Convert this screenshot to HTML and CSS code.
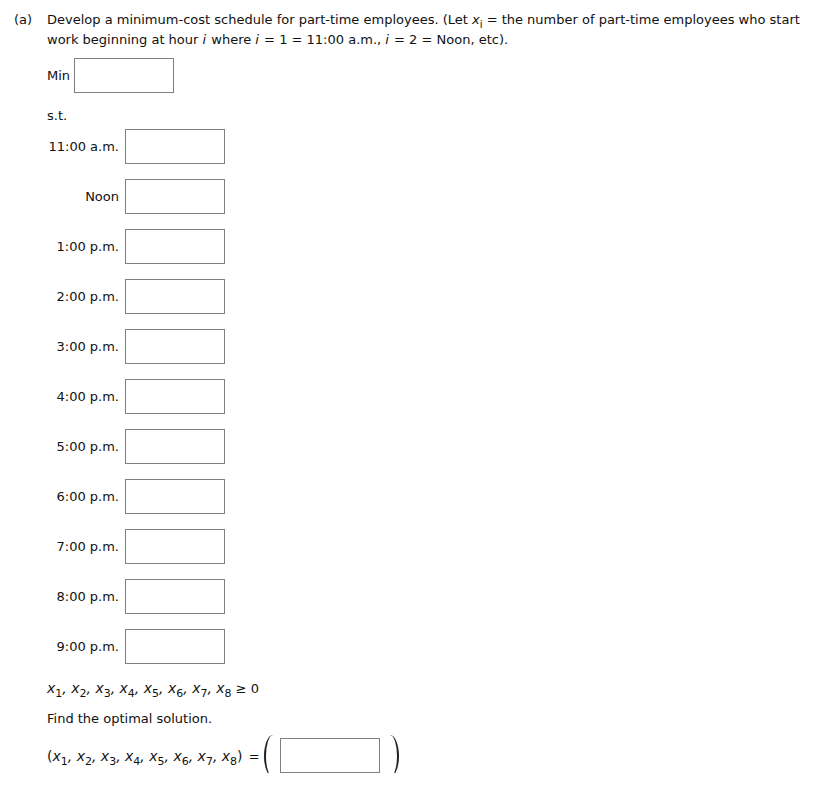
FILE: index.html
```html
<!DOCTYPE html>
<html>
<head>
<meta charset="utf-8">
<link rel="stylesheet" href="styles.css">
</head>
<body>
<div class="question">
  <div class="part-label">(a)</div>
  <div class="part-body">
    <p class="intro">Develop a minimum-cost schedule for part-time employees. (Let <i class="var">x<sub>i</sub></i> = the number of part-time employees who start work beginning at hour <i class="ivar">i</i> where <i class="ivar">i</i> = 1 = 11:00 a.m., <i class="ivar">i</i> = 2 = Noon, etc).</p>
    <div class="min-row"><span class="min-label">Min</span><input class="box" type="text"></div>
    <p class="st">s.t.</p>
    <div class="constraints">
      <div class="row"><span class="row-label">11:00 a.m.</span><input class="box" type="text"></div>
      <div class="row"><span class="row-label">Noon</span><input class="box" type="text"></div>
      <div class="row"><span class="row-label">1:00 p.m.</span><input class="box" type="text"></div>
      <div class="row"><span class="row-label">2:00 p.m.</span><input class="box" type="text"></div>
      <div class="row"><span class="row-label">3:00 p.m.</span><input class="box" type="text"></div>
      <div class="row"><span class="row-label">4:00 p.m.</span><input class="box" type="text"></div>
      <div class="row"><span class="row-label">5:00 p.m.</span><input class="box" type="text"></div>
      <div class="row"><span class="row-label">6:00 p.m.</span><input class="box" type="text"></div>
      <div class="row"><span class="row-label">7:00 p.m.</span><input class="box" type="text"></div>
      <div class="row"><span class="row-label">8:00 p.m.</span><input class="box" type="text"></div>
      <div class="row"><span class="row-label">9:00 p.m.</span><input class="box" type="text"></div>
    </div>
    <p class="nonneg"><i class="var math">x<sub>1</sub>, x<sub>2</sub>, x<sub>3</sub>, x<sub>4</sub>, x<sub>5</sub>, x<sub>6</sub>, x<sub>7</sub>, x<sub>8</sub></i> ≥ 0</p>
    <p class="find">Find the optimal solution.</p>
    <div class="answer">
      <span class="tuple"><span class="math">(</span><i class="var math">x<sub>1</sub>, x<sub>2</sub>, x<sub>3</sub>, x<sub>4</sub>, x<sub>5</sub>, x<sub>6</sub>, x<sub>7</sub>, x<sub>8</sub></i><span class="math">)</span> <span class="eq">=</span></span>
      <span class="paren paren-left"></span>
      <input class="box" type="text">
      <span class="paren paren-right"></span>
    </div>
  </div>
</div>
</body>
</html>
```

FILE: styles.css
```css
html, body {
  margin: 0;
  padding: 0;
  background: #ffffff;
}

body {
  font-family: "DejaVu Sans", Verdana, sans-serif;
  font-size: 13px;
  color: #111111;
}

.question {
  display: flex;
  padding: 10px 0 0 14px;
}

.part-label {
  width: 33px;
  line-height: 20px;
  flex: none;
}

.part-body {
  width: 770px;
}

p {
  margin: 0;
  line-height: 20px;
}

sub {
  font-size: 10px;
  line-height: 0;
  vertical-align: -4px;
  font-style: normal;
}

.var {
  font-style: italic;
}

.ivar {
  padding-right: 1px;
}

.math {
  font-size: 14px;
}

.math sub {
  font-size: 11px;
}

.box {
  display: block;
  box-sizing: border-box;
  width: 100px;
  height: 35px;
  margin: 0;
  padding: 0;
  border: 1px solid #7f7f7f;
  background: #fff;
  outline: none;
}

.min-row {
  display: flex;
  align-items: center;
  gap: 4px;
  margin-top: 8px;
}

.st {
  margin-top: 13px;
}

.constraints {
  display: flex;
  flex-direction: column;
  gap: 15px;
  margin-top: 3px;
}

.row {
  display: flex;
  align-items: center;
  gap: 6px;
}

.row-label {
  width: 72px;
  text-align: right;
  white-space: nowrap;
}

.nonneg {
  margin-top: 14px;
}

.find {
  margin-top: 10px;
}

.answer {
  display: flex;
  align-items: center;
  margin-top: 9px;
  height: 35px;
}

.tuple {
  white-space: nowrap;
}

.eq {
  margin-left: 2px;
}

.paren {
  display: block;
  box-sizing: border-box;
  width: 9px;
  height: 42px;
  flex: none;
}

.paren-left {
  margin-left: 4px;
  margin-right: 7px;
  border-left: 2px solid #222;
  border-radius: 100% 0 0 100% / 50% 0 0 50%;
}

.paren-right {
  margin-left: 10px;
  border-right: 2px solid #222;
  border-radius: 0 100% 100% 0 / 0 50% 50% 0;
}
```
